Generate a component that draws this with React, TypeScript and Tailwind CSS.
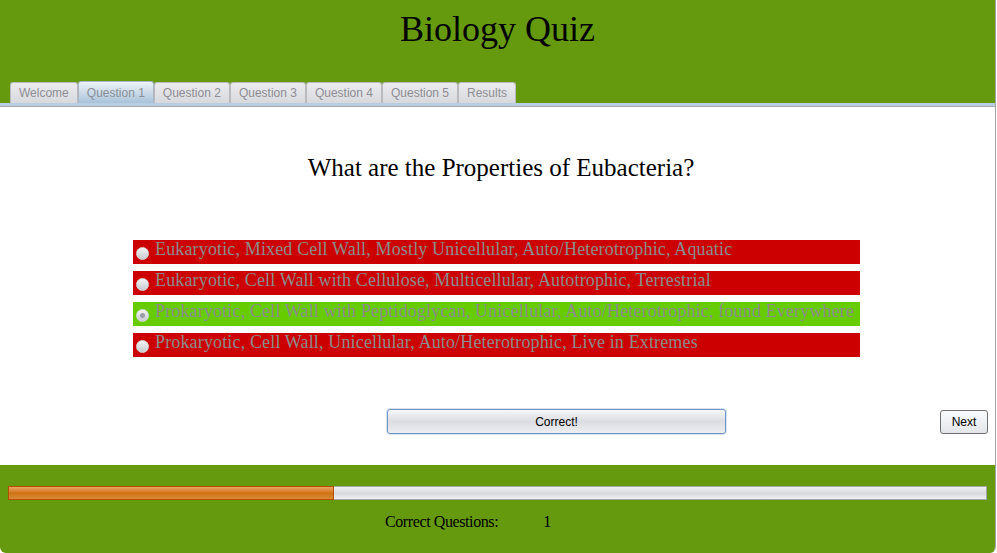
import { useState } from 'react';

const tabs = ['Welcome', 'Question 1', 'Question 2', 'Question 3', 'Question 4', 'Question 5', 'Results'];

const answers = [
  { text: 'Eukaryotic, Mixed Cell Wall, Mostly Unicellular, Auto/Heterotrophic, Aquatic', correct: false },
  { text: 'Eukaryotic, Cell Wall with Cellulose, Multicellular, Autotrophic, Terrestrial', correct: false },
  { text: 'Prokaryotic, Cell Wall with Peptidoglycan, Unicellular, Auto/Heterotrophic, found Everywhere', correct: true },
  { text: 'Prokaryotic, Cell Wall, Unicellular, Auto/Heterotrophic, Live in Extremes', correct: false },
];

/** Swing-style radio bubble */
function Radio({ checked }: { checked: boolean }) {
  return (
    <span className="w-[13px] h-[13px] rounded-full shrink-0 flex items-center justify-center bg-gradient-to-b from-[#f4f4f6] to-[#c9cbd0] border border-[#d8dade]">
      {checked && <span className="w-[5px] h-[5px] rounded-full bg-[#9a9ca3]" />}
    </span>
  );
}

export default function App() {
  const [selected] = useState(2);
  const progress = 1 / 3;

  return (
    <div className="w-[997px] h-[553px] flex bg-white overflow-hidden" style={{ fontFamily: "'Liberation Serif', serif" }}>
      <div className="w-[996px] h-full flex flex-col border-r border-[#a3a3a3] rounded-b-[6px] overflow-hidden">
        {/* Header */}
        <div className="h-[103px] bg-[#659a0f] flex flex-col shrink-0">
          <div className="h-[81px] pt-[9px] text-center text-[36px] leading-[40px] text-black">Biology Quiz</div>
          <div className="flex pl-[10px] h-[22px] items-end">
            {tabs.map((t, i) => (
              <div
                key={t}
                className={
                  i === 1
                    ? 'h-[22px] px-[8px] flex items-center rounded-t-[3px] border border-b-0 border-[#a9b6c4] bg-gradient-to-b from-[#eef3f8] to-[#a9c2da] text-[12px] text-[#8a8f96]'
                    : 'h-[21px] px-[8px] flex items-center rounded-t-[3px] border border-b-0 border-[#b9b9be] bg-gradient-to-b from-[#ececef] to-[#d8d9dd] text-[12px] text-[#8d8d93]'
                }
                style={{ fontFamily: "'Liberation Sans', Arial, sans-serif" }}
              >
                {t}
              </div>
            ))}
          </div>
        </div>
        <div className="h-[4px] bg-[#b8cde2] border-b border-[#a9a9ad] shrink-0" />

        {/* Question body */}
        <div className="flex-1 bg-white flex flex-col">
          <div className="mt-[46px] pl-[7px] text-center text-[25px] leading-[29px] text-black">What are the Properties of Eubacteria?</div>
          <div className="mt-[58px] ml-[133px] w-[727px] flex flex-col gap-[7px]">
            {answers.map((a, i) => (
              <div
                key={a.text}
                className={
                  a.correct
                    ? 'h-[24px] flex items-center gap-[6px] pl-[3px] bg-[#66cc00] whitespace-nowrap overflow-hidden'
                    : 'h-[24px] flex items-center gap-[6px] pl-[3px] bg-[#cc0000] whitespace-nowrap overflow-hidden'
                }
              >
                <span className="mt-[2px]">
                  <Radio checked={i === selected} />
                </span>
                <span className="text-[18px] leading-[20px] tracking-[0.15px] text-[#8c8c8c] -mt-[6px]">{a.text}</span>
              </div>
            ))}
          </div>
          <div className="mt-[52px] flex items-start">
            <button
              className="ml-[387px] w-[339px] h-[25px] rounded-[3px] border border-[#6f96c8] bg-gradient-to-b from-[#f6f7f9] via-[#dcdde2] to-[#eceef2] text-[12px] text-black shadow-[0_0_0_1px_rgba(140,170,210,0.35)]"
              style={{ fontFamily: "'Liberation Sans', Arial, sans-serif" }}
            >
              Correct!
            </button>
            <button
              className="ml-[214px] mt-[1px] w-[48px] h-[24px] rounded-[3px] border border-[#707070] bg-gradient-to-b from-[#fafbfc] to-[#e3e5ea] text-[12px] text-black"
              style={{ fontFamily: "'Liberation Sans', Arial, sans-serif" }}
            >
              Next
            </button>
          </div>
        </div>

        {/* Footer */}
        <div className="h-[88px] bg-[#659a0f] shrink-0 flex flex-col">
          <div className="mt-[21px] ml-[8px] w-[979px] h-[14px] border border-[#a5a5a8] bg-gradient-to-b from-[#f2f2f4] via-[#d8d9dd] to-[#eeeff1] relative">
            <div
              className="h-full border border-[#b34d00] bg-gradient-to-b from-[#eaa660] via-[#d07210] to-[#d98a35] -m-[1px] box-content"
              style={{ width: `${progress * 977 - 2}px` }}
            />
          </div>
          <div className="mt-[12px] ml-[385px] flex text-[16px] leading-[20px] text-black">
            <span className="tracking-[-0.4px]">Correct Questions:</span>
            <span className="ml-[45px]">1</span>
          </div>
        </div>
      </div>
    </div>
  );
}
